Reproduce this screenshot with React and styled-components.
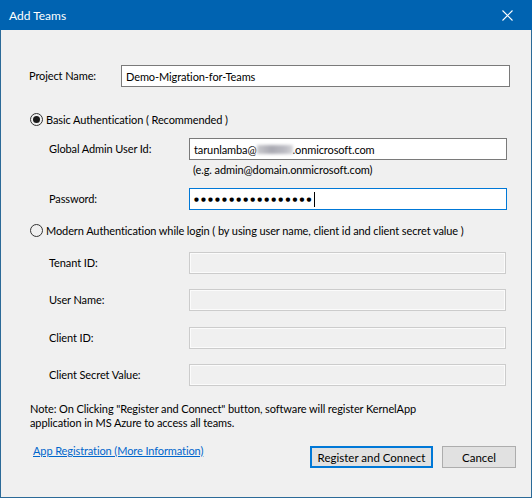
import React from "react";
import styled, { createGlobalStyle } from "styled-components";

const Global = createGlobalStyle`
  html, body { margin: 0; padding: 0; background: #f0f0f0; }
  body {
    font-family: Lato, "Liberation Sans", sans-serif;
    font-size: 11px;
    letter-spacing: -0.1px;
    color: #000;
  }
`;

const Window = styled.div`
  width: 532px;
  height: 498px;
  box-sizing: border-box;
  border: 1px solid #2b6a98;
  border-top: none;
  background: #f0f0f0;
  display: flex;
  flex-direction: column;
  white-space: nowrap;
`;

const TitleBar = styled.div`
  height: 30px;
  margin: 0 -1px;
  background: #0063b1;
  color: #fff;
  display: flex;
  align-items: center;
  justify-content: space-between;
  padding: 0 19px 0 9px;
  font-size: 12px;
  letter-spacing: 0;
`;

const Close = styled.svg`
  width: 11px;
  height: 11px;
`;

const Content = styled.div`
  display: flex;
  flex-direction: column;
  padding: 0 0 0 27px;
`;

const Row = styled.div`
  display: flex;
  align-items: center;
  margin-top: ${(p) => p.$mt}px;
  padding-left: ${(p) => p.$indent || 0}px;
`;

const Label = styled.div`
  width: ${(p) => p.$w}px;
  flex: none;
  line-height: 22px;
`;

const TextBox = styled.div`
  box-sizing: border-box;
  width: ${(p) => p.$w}px;
  height: 22px;
  background: ${(p) => (p.$disabled ? "#f0f0f0" : "#fff")};
  border: 1px solid
    ${(p) => (p.$focus ? "#0078d7" : p.$disabled ? "#cccccc" : "#7a7a7a")};
  box-shadow: ${(p) => (p.$disabled ? "inset 0 0 0 1px #fbfbfb" : "none")};
  display: flex;
  align-items: center;
  padding-left: 4px;
  white-space: nowrap;
`;

const Blur = styled.span`
  display: inline-block;
  width: 36px;
  height: 9px;
  background: linear-gradient(90deg, #c9c9cd, #a9a9b2 40%, #bdbdc4 80%, #d8d8dc);
  filter: blur(1.5px);
  vertical-align: middle;
`;

const Dots = styled.span`
  font-family: "DejaVu Sans", sans-serif;
  font-size: 5.6px;
  letter-spacing: 2.15px;
  line-height: 22px;
`;

const Caret = styled.span`
  display: inline-block;
  width: 1px;
  height: 15px;
  background: #000;
`;

const Hint = styled.div`
  margin-top: 3px;
  padding-left: 165px;
  line-height: 14px;
`;

const Radio = styled.label`
  display: flex;
  align-items: center;
  margin-top: ${(p) => p.$mt}px;
  height: 16px;
  gap: 3px;
`;

const Circle = styled.span`
  width: 11px;
  height: 11px;
  border: 1px solid #333;
  border-radius: 50%;
  display: flex;
  align-items: center;
  justify-content: center;
  margin-left: 2px;
  &::after {
    content: "";
    display: ${(p) => (p.$checked ? "block" : "none")};
    width: 7px;
    height: 7px;
    border-radius: 50%;
    background: #1a1a1a;
  }
`;

const Note = styled.div`
  margin-top: 16px;
  padding-left: 2px;
  line-height: 14px;
`;

const Footer = styled.div`
  display: flex;
  align-items: flex-start;
  margin-top: 16px;
`;

const Link = styled.a`
  color: #0066cc;
  text-decoration: underline;
  margin-left: 5px;
  margin-top: -2px;
  line-height: 14px;
  cursor: pointer;
`;

const Button = styled.button`
  box-sizing: border-box;
  width: ${(p) => p.$w}px;
  height: 22px;
  margin-left: ${(p) => p.$ml};
  margin-right: ${(p) => p.$mr || 0}px;
  background: #e1e1e1;
  border: ${(p) => (p.$default ? "2px solid #0078d7" : "1px solid #adadad")};
  font-family: inherit;
  font-size: 11.5px;
  color: #000;
  padding: 0;
  white-space: nowrap;
`;

export default function App() {
  return (
    <>
      <Global />
      <Window>
        <TitleBar>
          <span>Add Teams</span>
          <Close viewBox="0 0 11 11">
            <path d="M0.5 0.5L10.5 10.5M10.5 0.5L0.5 10.5" stroke="#fff" strokeWidth="1.1" />
          </Close>
        </TitleBar>
        <Content>
          <Row $mt={35} $indent={1}>
            <Label $w={92}>Project Name:</Label>
            <TextBox $w={389}>Demo-Migration-for-Teams</TextBox>
          </Row>

          <Radio $mt={24}>
            <Circle $checked />
            <span>Basic Authentication ( Recommended )</span>
          </Radio>

          <Row $mt={11} $indent={21}>
            <Label $w={140}>Global Admin User Id:</Label>
            <TextBox $w={318}>
              tarunlamba@<Blur />.onmicrosoft.com
            </TextBox>
          </Row>
          <Hint>(e.g. admin@domain.onmicrosoft.com)</Hint>
          <Row $mt={11} $indent={21}>
            <Label $w={140}>Password:</Label>
            <TextBox $w={318} $focus>
              <Dots>{"●".repeat(17)}</Dots>
              <Caret />
            </TextBox>
          </Row>

          <Radio $mt={12}>
            <Circle />
            <span>Modern Authentication while login ( by using user name, client id and client secret value )</span>
          </Radio>

          <Row $mt={14} $indent={21}>
            <Label $w={140}>Tenant ID:</Label>
            <TextBox $w={317} $disabled />
          </Row>
          <Row $mt={15} $indent={21}>
            <Label $w={140}>User Name:</Label>
            <TextBox $w={317} $disabled />
          </Row>
          <Row $mt={16} $indent={21}>
            <Label $w={140}>Client ID:</Label>
            <TextBox $w={317} $disabled />
          </Row>
          <Row $mt={15} $indent={21}>
            <Label $w={140}>Client Secret Value:</Label>
            <TextBox $w={317} $disabled />
          </Row>

          <Note>
            Note: On Clicking "Register and Connect" button, software will register KernelApp
            <br />
            application in MS Azure to access all teams.
          </Note>

          <Footer>
            <Link>App Registration (More Information)</Link>
            <Button $w={123} $ml="auto" $default>
              Register and Connect
            </Button>
            <Button $w={74} $ml="9px" $mr={15}>
              Cancel
            </Button>
          </Footer>
        </Content>
      </Window>
    </>
  );
}
